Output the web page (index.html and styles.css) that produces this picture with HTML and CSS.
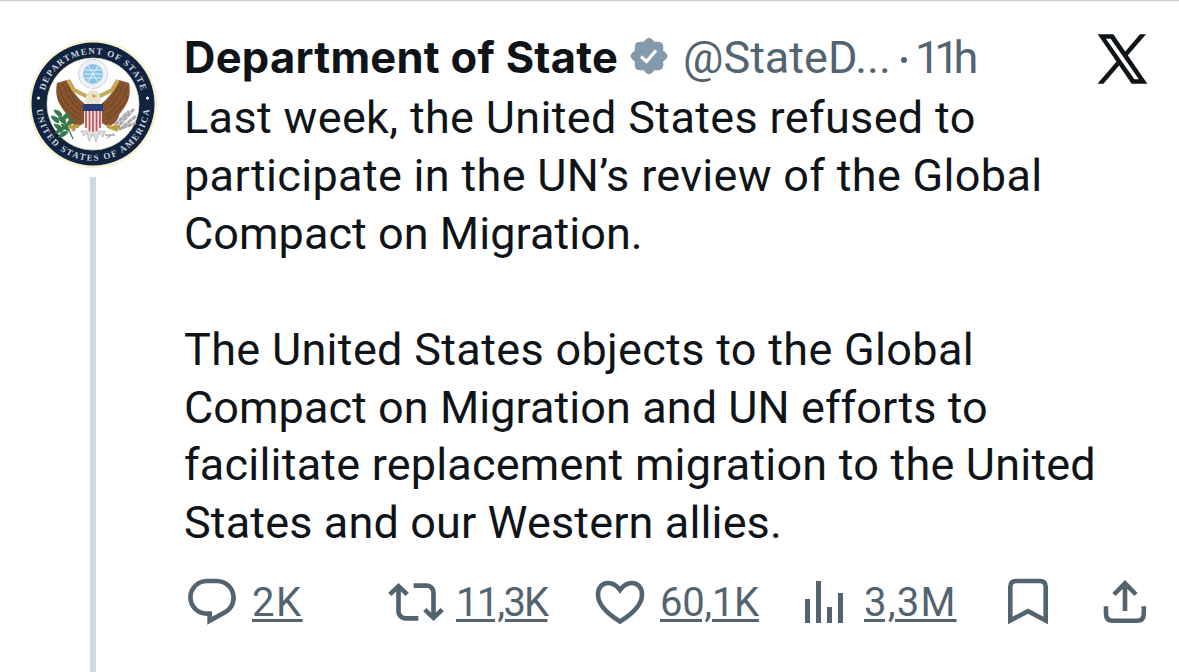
FILE: index.html
```html
<!DOCTYPE html>
<html lang="en">
<head>
<meta charset="utf-8">
<title>Post</title>
<link rel="stylesheet" href="styles.css">
</head>
<body>
<article class="post">
  <aside class="rail">
    <svg class="seal" viewBox="-64 -64 128 128" role="img" aria-label="Department of State seal">
      <defs>
        <path id="arc-top" d="M-50 0A50 50 0 0 1 50 0"/>
        <path id="arc-bottom" d="M-56.800 0A56.800 56.800 0 0 0 56.800 0"/>
        <g id="wing">
          <path fill="#87542f" d="M-9-1C-15-5-22-15-26-24L-36-21C-38-11-36-3-31 4L-26 11C-25 17-20 22-14 22L-7 18L-7 4Z"/>
          <path fill="none" stroke="#683c1c" stroke-width=".8" d="M-34-17C-31-5-25 4-12 12M-30-20C-26-8-21 1-10 7M-26-18C-22-9-18-2-10 3M-35-8C-30 2-25 9-14 15"/>
        </g>
        <path id="leaf" d="M0 0Q-6-1-8-7Q0-7 0 0"/>
      </defs>
      <circle r="64" fill="#f4f2d2"/>
      <circle r="61.500" fill="#11233f"/>
      <circle r="46" fill="#fff" stroke="#dcd8b8" stroke-width=".8"/>
      <text class="seal-text"><textPath href="#arc-top" startOffset="50%" text-anchor="middle" textLength="130">DEPARTMENT OF STATE</textPath></text>
      <text class="seal-text"><textPath href="#arc-bottom" startOffset="50%" text-anchor="middle" textLength="167">UNITED STATES OF AMERICA</textPath></text>
      <circle cx="-54.500" cy="-6" r="1.500" fill="#fff"/><circle cx="54.500" cy="-6" r="1.500" fill="#fff"/>
      <circle cy="-30" r="14.500" fill="#eef2f6" stroke="#b9c3ca" stroke-width="1" stroke-dasharray="2 1"/>
      <circle cy="-30" r="10" fill="#8cc4e6"/>
      <path stroke="#e1f2fa" stroke-width="1" d="M-9-30H9M-5-38L5-22M5-38L-5-22M-8-34H8M-8-26H8"/>
      <use href="#wing"/><use href="#wing" transform="scale(-1 1)"/>
      <path d="M-25-24L-19-14L-9-9L-3-6M25-24L19-14L9-9L3-6" fill="none" stroke="#c3ab58" stroke-width="4"/>
      <path d="M-8-3Q-6-15 0-14Q6-15 8-3L5 3H-5Z" fill="#e9e3d0"/>
      <path d="M-1-10L4-8L0-6Z" fill="#c9a53e"/>
      <path d="M-12 27L-9 32L-6 29L-4 37L0 30L3 38L6 29L10 33L12 27Z" fill="#dfdfdf" stroke="#aaa" stroke-width=".7"/>
      <path d="M-9 1H9V21Q7 26 0 29Q-7 26-9 21Z" fill="#f4e4e4"/>
      <path d="M-7 6V24M-3.500 6V27M0 6V28M3.500 6V27M7 6V24" stroke="#c0505c" stroke-width="1.700"/>
      <path d="M-10 0H10V7H-10Z" fill="#263e78"/>
      <path d="M-35 8Q-28 16-20 35" fill="none" stroke="#3c7447" stroke-width="1.200"/>
      <g fill="#34784a" stroke="#34784a" stroke-width=".8">
        <use href="#leaf" x="-31" y="13"/><use href="#leaf" x="-27" y="20"/><use href="#leaf" x="-24" y="27"/><use href="#leaf" x="-34" y="19"/><use href="#leaf" x="-31" y="27"/>
        <use href="#leaf" transform="translate(-31 16) rotate(90)"/><use href="#leaf" transform="translate(-27 22) rotate(90)"/><use href="#leaf" transform="translate(-28 24) rotate(-70)"/><use href="#leaf" transform="translate(-25 28) rotate(-70)"/>
      </g>
      <path d="M23 25L41 5M26 26L43 12M29 24L43 19M22 21L36 7" stroke="#aaa" stroke-width="2.800" stroke-dasharray="5 .6"/>
      <path d="M12 31L22 31M14 34L20 30" stroke="#a9a9a9" stroke-width="1.500"/>
      <path d="M-14 22L-25 23M-18 22L-20 27M14 22L25 26M20 23L27 23" stroke="#bd9e43" stroke-width="3.500"/>
    </svg>
    <div class="thread"></div>
  </aside>
  <div class="main">
    <header class="head">
      <span class="name">Department of State</span>
      <svg class="badge" viewBox="0 0 38 38"><path fill="#829aab" d="M19 .5Q23 2 24.500 5Q29 4 32 6Q34 9 33 13.500Q37 16 37.500 19Q37 22 33 24.500Q34 29 32 32Q29 34 24.500 33Q23 36 19 37.500Q15 36 13.500 33Q9 34 6 32Q4 29 5 24.500Q1 22 .5 19Q1 16 5 13.500Q4 9 6 6Q9 4 13.500 5Q15 2 19 .5Z"/><path d="M11 19.500L16.500 24.500L26 13.500" fill="none" stroke="#fff" stroke-width="3.200"/></svg>
      <span class="handle">@StateD...</span><span class="dot"></span><span class="time">11h</span>
      <svg class="x-logo" viewBox="0 0 1200 1227" preserveAspectRatio="none"><path fill="#0f1419" stroke="#0f1419" stroke-width="36" d="M714.163 519.284L1160.890 0H1055.030L667.137 450.887L357.328 0H0L468.492 681.821L0 1226.370H105.866L515.491 750.218L842.672 1226.370H1200L714.137 519.284ZM569.165 687.828L521.697 619.934L144.011 79.694H306.615L611.412 515.685L658.880 583.579L1055.080 1150.300H892.476L569.165 687.854Z"/></svg>
    </header>
    <div class="body">
      <p class="l1">Last week, the United States refused to</p>
      <p class="l2">participate in the UN’s review of the Global</p>
      <p class="l3">Compact on Migration.</p>
      <p>&nbsp;</p>
      <p class="l5">The United States objects to the Global</p>
      <p class="l6">Compact on Migration and UN efforts to</p>
      <p class="l7">facilitate replacement migration to the United</p>
      <p class="l8">States and our Western allies.</p>
    </div>
    <footer class="actions">
      <div class="action">
        <svg viewBox="0 0 24 24"><path fill="currentColor" d="M1.751 10c0-4.420 3.584-8 8.005-8h4.366c4.490 0 8.129 3.640 8.129 8.130 0 2.960-1.607 5.680-4.196 7.110l-8.054 4.460v-3.690h-.067c-4.490.1-8.183-3.510-8.183-8.010zm8.005-6c-3.317 0-6.005 2.690-6.005 6 0 3.370 2.770 6.080 6.138 6.010l.351-.01h1.761v2.300l5.087-2.810c1.951-1.080 3.163-3.130 3.163-5.360 0-3.390-2.744-6.130-6.129-6.130H9.756z"/></svg>
        <span class="n1">2K</span>
      </div>
      <div class="action">
        <svg viewBox="0 0 24 24"><path fill="currentColor" d="M4.500 3.880l4.432 4.140-1.364 1.460L5.500 7.550V16c0 1.100.896 2 2 2H13v2H7.500c-2.209 0-4-1.790-4-4V7.550L1.432 9.480.068 8.020 4.500 3.880zM16.500 6H11V4h5.500c2.209 0 4 1.790 4 4v8.450l2.068-1.930 1.364 1.460-4.432 4.140-4.432-4.140 1.364-1.460 2.068 1.930V8c0-1.100-.896-2-2-2z"/></svg>
        <span class="n2">11,3K</span>
      </div>
      <div class="action">
        <svg class="line" viewBox="0 0 56 56"><path d="M28 16C24.500 11 20.500 9 16 9C10 9 6 14 6 20.500C6 31 15 39.500 28 47.500C41 39.500 50 31 50 20.500C50 14 46 9 40 9C35.500 9 31.500 11 28 16Z"/></svg>
        <span class="n3">60,1K</span>
      </div>
      <div class="action">
        <svg viewBox="0 0 56 56"><path fill="currentColor" d="M9 25h5v24H9zM20 7h5v42h-5zM31 33h5v16h-5zM42 19h5v30h-5z"/></svg>
        <span class="n4">3,3M</span>
      </div>
      <svg class="line" viewBox="0 0 56 56"><path d="M10.300 46.500V13Q10.300 7 16.300 7H39.700Q45.700 7 45.700 13V46.500L28 37.200Z"/></svg>
      <svg class="line" viewBox="0 0 56 56"><path d="M9 32.300V39.800Q9 46.800 16 46.800H39.800Q46.800 46.800 46.800 39.800V32.300M28 9V37M17 20.500L28 9.300L39 20.500"/></svg>
    </footer>
  </div>
</article>
</body>
</html>
```
FILE: styles.css
```css
body {
  margin: 0;
  background: #fff;
  color: #0f1419;
  font-family: Roboto, sans-serif;
}

.post {
  display: flex;
  height: 671px;
  border-top: 1px solid #ccc;
  overflow: hidden;
}

.rail {
  box-sizing: border-box;
  width: 184px;
  padding: 39px 0 0 29px;
}

.seal {
  display: block;
  width: 128px;
  height: 128px;
}

.seal-text {
  font: bold 9px "Liberation Serif", serif;
  fill: #cdd5de;
}

.thread {
  width: 6px;
  height: 500px;
  margin: 9px 0 0 61px;
  background: #cfd9de;
}

.main {
  flex: 1;
  padding-top: 28px;
}

.head {
  display: flex;
  height: 60px;
  font-size: 45px;
  line-height: 58px;
  white-space: nowrap;
}

.name {
  width: 446px;
  font-family: Inter, sans-serif;
  font-size: 43.5px;
  font-weight: 700;
  line-height: 56px;
  letter-spacing: .25px;
}

.badge {
  width: 38px;
  height: 38px;
  margin-top: 8px;
}

.handle {
  width: 218px;
  margin-left: 15px;
  color: #536471;
}

.dot {
  width: 6px;
  height: 6px;
  margin-top: 28px;
  border-radius: 50%;
  background: #536471;
}

.time {
  width: 184px;
  margin-left: 8px;
  color: #536471;
  letter-spacing: -6px;
}

.x-logo {
  width: 47px;
  height: 48px;
  margin-top: 6px;
  overflow: visible;
}

.body p {
  margin: 0;
  font-size: 45px;
  line-height: 57.9px;
  white-space: nowrap;
}

.body .l1 { letter-spacing: .34px; }
.body .l2 { letter-spacing: .32px; }
.body .l3 { letter-spacing: .05px; }
.body .l5 { letter-spacing: .32px; }
.body .l6 { letter-spacing: .06px; }
.body .l7 { letter-spacing: .2px; }
.body .l8 { letter-spacing: .13px; }

.actions {
  display: grid;
  grid-template-columns: repeat(4, 204px) 97px 56px;
  margin-top: 21.4px;
  color: #536471;
}

.actions svg {
  width: 56px;
  height: 56px;
}

.action {
  display: flex;
  gap: 12px;
  font-size: 40px;
  line-height: 58px;
  height: 56px;
}

.action span {
  text-decoration: underline;
  text-decoration-thickness: 3px;
  text-underline-offset: 3px;
}

.line {
  fill: none;
  stroke: currentColor;
  stroke-width: 4.6px;
}

.n1 { letter-spacing: 1.5px; }
.n2 { letter-spacing: -1.8px; }
.n3 { letter-spacing: -.3px; }
.n4 { letter-spacing: 1.2px; }
```
